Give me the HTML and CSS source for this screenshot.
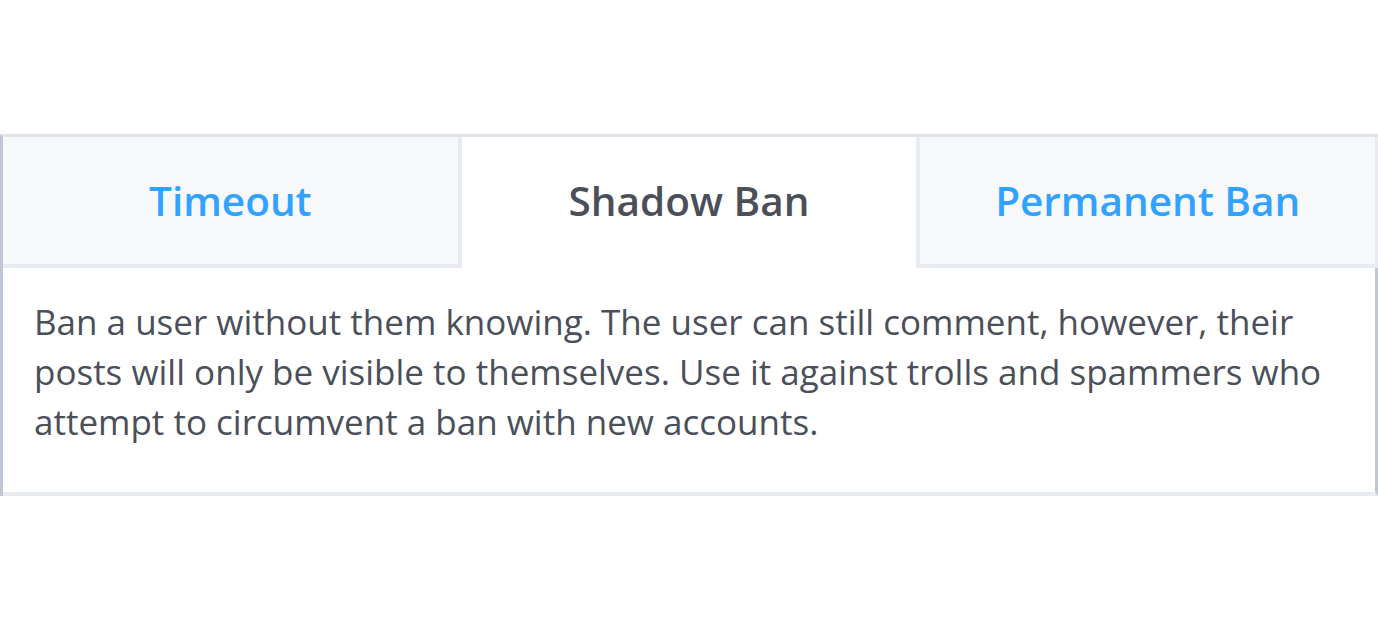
FILE: index.html
```html
<!DOCTYPE html>
<html lang="en">
<head>
  <meta charset="UTF-8" />
  <meta name="viewport" content="width=device-width, initial-scale=1.0"/>
  <title>Ban options</title>
  <link rel="stylesheet" href="styles.css">
</head>
<body>

  <section class="panel">
    <nav class="tabs">
      <a class="tab tab-first" href="#">Timeout</a>
      <a class="tab tab-active" href="#">Shadow Ban</a>
      <a class="tab tab-last" href="#">Permanent Ban</a>
    </nav>
    <div class="tab-body">
      <p>Ban a user without them knowing. The user can still comment, however, their posts will only be visible to themselves. Use it against trolls and spammers who attempt to circumvent a ban with new accounts.</p>
    </div>
  </section>

</body>
</html>
```

FILE: styles.css
```css
body {
  font-family: 'Open Sans', 'Liberation Sans', sans-serif;
  background-color: #ffffff;
  color: #4a4f59;
  margin: 0;
}

.panel {
  margin-top: 134px;
  border-top: 3px solid #e0e3ea;
  border-left: 3px solid #c0c6d3;
}

.tabs {
  display: flex;
}

.tab {
  flex: 1 1 0;
  height: 127px;
  display: flex;
  align-items: center;
  justify-content: center;
  background: #f7f8fa;
  border-bottom: 4px solid #e8ebf0;
  color: #31a2ff;
  font-size: 40.5px;
  font-weight: 600;
  text-decoration: none;
}

.tab-first {
  border-right: 4px solid #e8ebf0;
}

.tab-last {
  border-left: 4px solid #e8ebf0;
  border-right: 3px solid #e8ebf0;
}

.tab-active {
  background: #ffffff;
  border-bottom-color: transparent;
  color: #4a4f59;
}

.tab-body {
  padding: 29px 30px 45px 31px;
  border-right: 3px solid #c0c6d3;
  border-bottom: 4px solid #e8ebf0;
}

.tab-body p {
  margin: 0;
  font-size: 35px;
  line-height: 50px;
}
```
